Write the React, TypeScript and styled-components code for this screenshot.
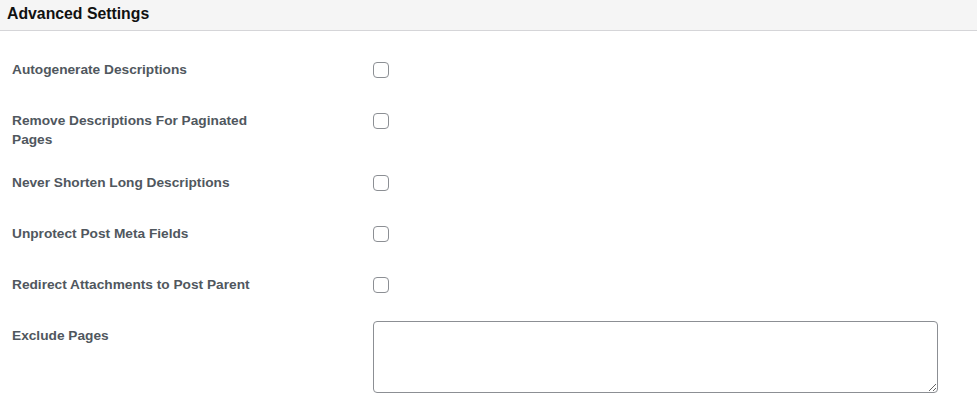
import styled, { createGlobalStyle } from "styled-components";

const GlobalStyle = createGlobalStyle`
  body {
    margin: 0;
    background: #ffffff;
    font-family: "Liberation Sans", Arial, sans-serif;
  }
`;

const Panel = styled.section`
  width: 977px;
  height: 411px;
  overflow: hidden;
  background: #fff;
`;

const Header = styled.header`
  height: 30px;
  background: #f5f5f5;
  border-bottom: 1px solid #d5d5d8;
  display: flex;
  align-items: center;
  padding-left: 7px;
  box-sizing: content-box;
`;

const Title = styled.h2`
  margin: 0 0 3px;
  font-size: 15.8px;
  font-weight: 700;
  color: #111;
`;

const Form = styled.div`
  padding-top: 17px;
`;

const Row = styled.div`
  display: grid;
  grid-template-columns: 373px 1fr;
  align-items: start;
`;

const Label = styled.label`
  padding: 11.5px 0 12.5px 12px;
  font-size: 13.7px;
  line-height: 19px;
  font-weight: 700;
  color: #50575e;
`;

const LabelText = styled.span`
  display: block;
  max-width: 250px;
`;

const Control = styled.div<{ $top: number; $bottom: number }>`
  padding: ${(p) => p.$top}px 0 ${(p) => p.$bottom}px;
  display: flex;
`;

const Checkbox = styled.input.attrs({ type: "checkbox" })`
  appearance: none;
  margin: 0;
  width: 16px;
  height: 16px;
  border: 1px solid #8c8f94;
  border-radius: 4px;
  background: #fff;
  box-sizing: border-box;
`;

const TextArea = styled.textarea`
  margin: 0;
  width: 565px;
  height: 72px;
  box-sizing: border-box;
  border: 1px solid #8c8f94;
  border-radius: 4px;
  background: #fff;
  resize: both;
  font-family: inherit;
`;

const checks = [
  "Autogenerate Descriptions",
  "Remove Descriptions For Paginated Pages",
  "Never Shorten Long Descriptions",
  "Unprotect Post Meta Fields",
  "Redirect Attachments to Post Parent",
];

export default function App() {
  return (
    <>
      <GlobalStyle />
      <Panel>
        <Header>
          <Title>Advanced Settings</Title>
        </Header>
        <Form>
          {checks.map((name) => (
            <Row key={name}>
              <Label>
                <LabelText>{name}</LabelText>
              </Label>
              <Control $top={14} $bottom={21}>
                <Checkbox aria-label={name} />
              </Control>
            </Row>
          ))}
          <Row>
            <Label>
              <LabelText>Exclude Pages</LabelText>
            </Label>
            <Control $top={7} $bottom={10}>
              <TextArea aria-label="Exclude Pages" />
            </Control>
          </Row>
        </Form>
      </Panel>
    </>
  );
}
